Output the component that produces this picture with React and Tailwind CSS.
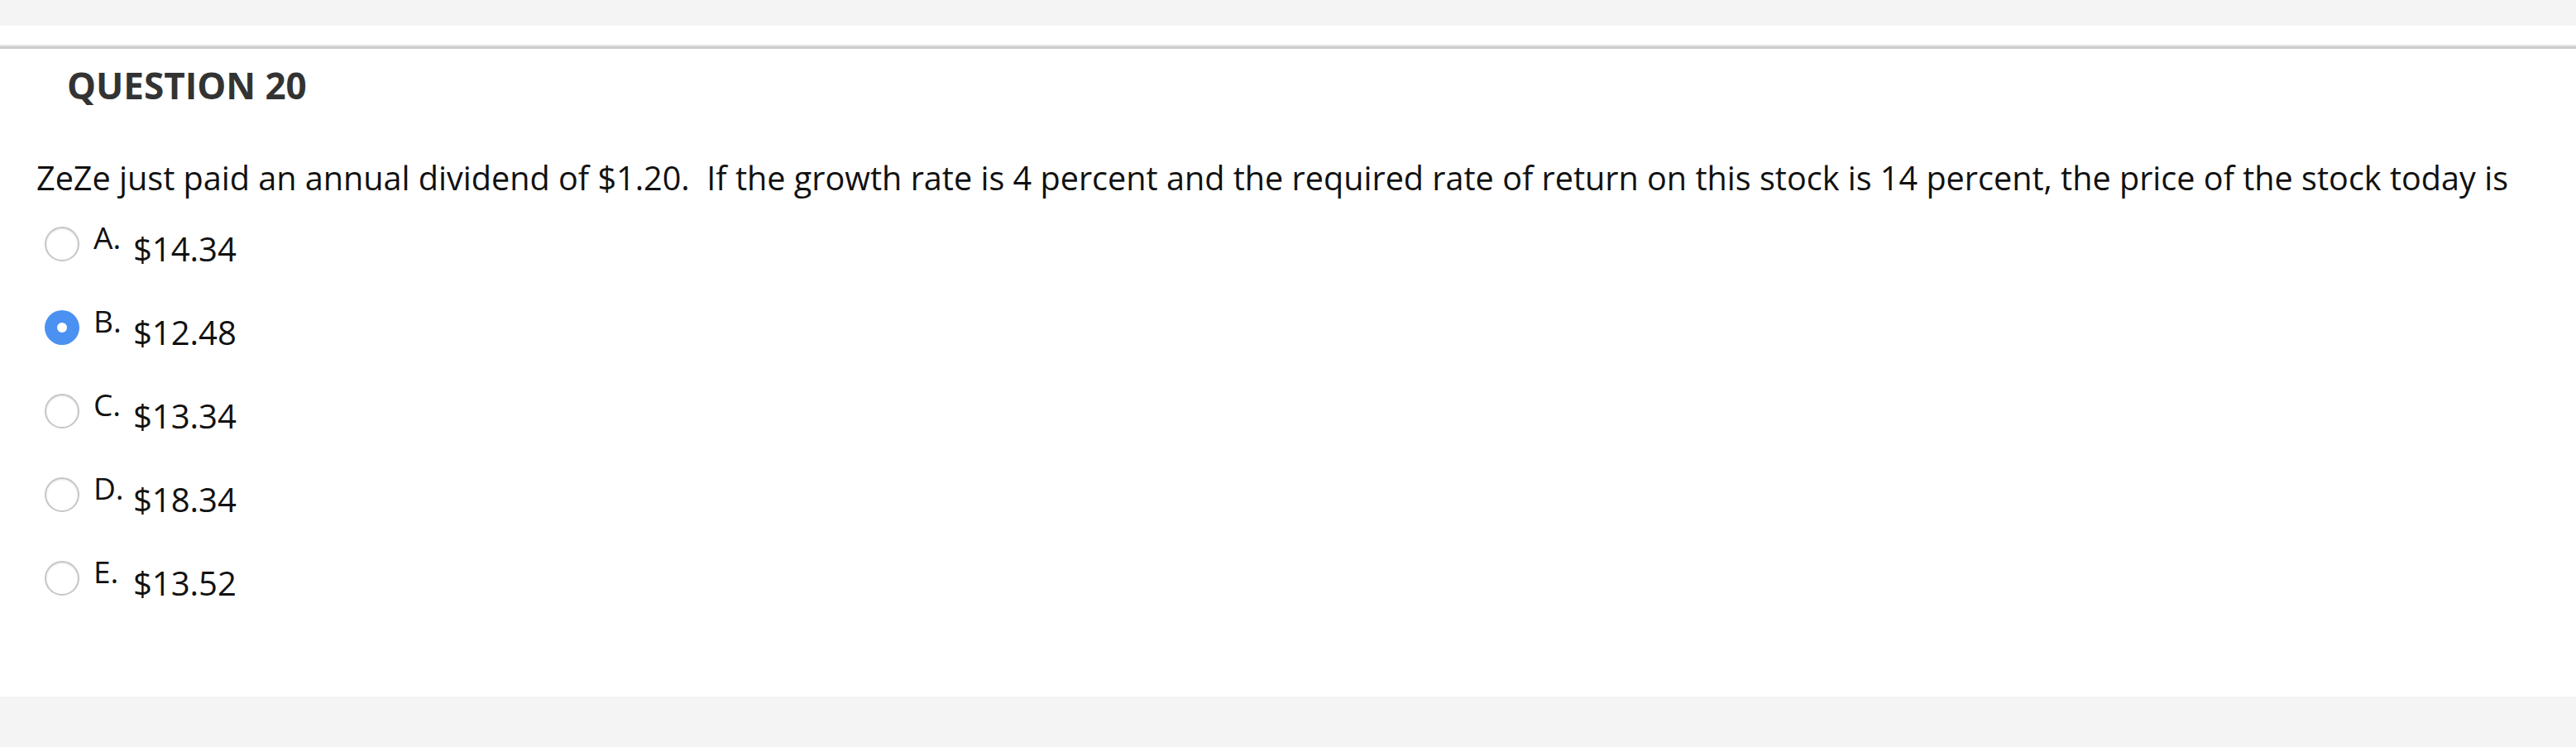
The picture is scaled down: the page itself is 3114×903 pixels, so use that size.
import React from "react";

const options = [
  { label: "A.", value: "$14.34", checked: false },
  { label: "B.", value: "$12.48", checked: true },
  { label: "C.", value: "$13.34", checked: false },
  { label: "D.", value: "$18.34", checked: false },
  { label: "E.", value: "$13.52", checked: false },
];

function Radio({ checked }) {
  if (checked) {
    return (
      <div className="mt-[6px] ml-[54px] w-[42px] h-[42px] rounded-full bg-[#4b91f1] flex items-center justify-center shrink-0">
        <div className="w-[12px] h-[12px] rounded-full bg-white" />
      </div>
    );
  }
  return (
    <div className="mt-[6px] ml-[54px] w-[42px] h-[42px] rounded-full bg-white border-[2px] border-[#c6c6c6] shadow-[inset_0_1px_2px_rgba(0,0,0,0.12)] shrink-0" />
  );
}

export default function App() {
  return (
    <div
      className="min-h-screen bg-[#f4f4f4] pt-[31px]"
      style={{ fontFamily: '"Open Sans", "Noto Sans", sans-serif' }}
    >
      <div className="bg-white h-[811px] pt-[23px]">
        <div className="h-[2px] bg-[#e6e6e6]" />
        <div className="h-[3px] bg-[#cccccc]" />
        <div className="pl-[81px] pt-[22px]">
          <h2 className="text-[44px] leading-none font-bold text-[#333333]">QUESTION 20</h2>
        </div>
        <p className="pl-[44px] mt-[71px] text-[39.6px] leading-none text-[#111111] whitespace-nowrap">
          ZeZe just paid an annual dividend of $1.20.&nbsp; If the growth rate is 4 percent and the required rate of return on this stock is 14 percent, the price of the stock today is
        </p>
        <div className="mt-[32px] flex flex-col">
          {options.map((o) => (
            <div key={o.label} className="flex items-start h-[101px]">
              <Radio checked={o.checked} />
              <span className="ml-[17px] w-[48px] text-[37px] leading-none text-[#111111]">{o.label}</span>
              <span className="mt-[13px] text-[40px] leading-none text-[#111111]">{o.value}</span>
            </div>
          ))}
        </div>
      </div>
    </div>
  );
}
